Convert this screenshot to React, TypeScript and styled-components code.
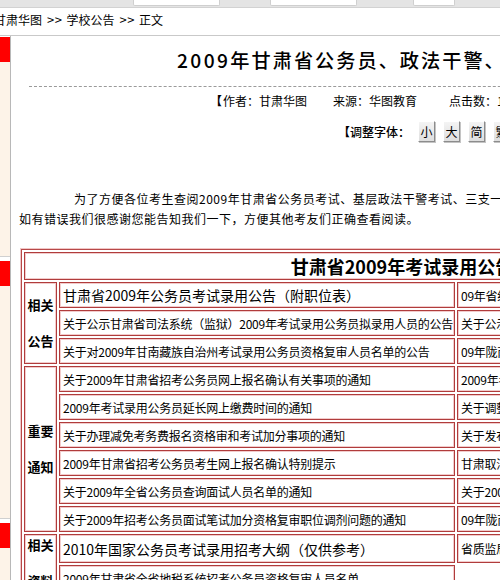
import React from 'react'
import styled, { createGlobalStyle } from 'styled-components'

const Global = createGlobalStyle`
  * { box-sizing: border-box; }
  html, body {
    margin: 0;
    padding: 0;
    background: #fff;
    overflow: hidden;
  }
  body {
    font-family: "Noto Sans CJK SC", "Noto Sans", sans-serif;
    font-size: 12px;
    color: #000;
    text-spacing-trim: space-all;
  }
`

const Page = styled.div`
  width: 820px;
`

const TopStrip = styled.div`
  height: 8px;
  background: #e4e4e4;
  border-bottom: 1px solid #d2d2d2;
  display: flex;
  align-items: flex-start;
`

const StripBox = styled.div<{ $left: number; $width: number }>`
  margin-left: ${({ $left }) => $left}px;
  width: ${({ $width }) => $width}px;
  height: 6px;
  background: #fff;
  border: 1px solid #cfcfcf;
  border-top: none;
  border-radius: 0 0 2px 2px;
`

const Crumbs = styled.div`
  height: 28px;
  padding-top: 4px;
  line-height: 16px;
  text-indent: -6px;
  border-bottom: 1px solid #c9c9c9;
  white-space: nowrap;
`

const Sep = styled.span`
  margin: 0 4px 0 5px;
  font-size: 13px;
  letter-spacing: 0.5px;
`

const Body = styled.div`
  display: flex;
  align-items: flex-start;
`

const Side = styled.div`
  width: 11px;
  flex: none;
  padding-top: 1px;
  border-right: 1px solid #b8b8b8;
  display: flex;
  flex-direction: column;
  gap: 4px;
  min-height: 560px;
`

const SideSection = styled.div<{ $body: number }>`
  display: flex;
  flex-direction: column;
  border-bottom: 1px solid #d0d0d0;

  &::before {
    content: '';
    height: 25px;
    background: #ff0000;
  }

  &::after {
    content: '';
    height: ${({ $body }) => $body}px;
    background: #fdf3e8;
  }
`

const Main = styled.div`
  flex: 1;
  padding-top: 10px;
`

const Title = styled.h1`
  margin: 0;
  padding-left: 166px;
  font-size: 19.2px;
  font-weight: 500;
  letter-spacing: 2px;
  line-height: 28px;
  white-space: nowrap;
`

const Digits = styled.span`
  letter-spacing: 2.4px;
`

const Dashed = styled.div`
  margin: 12px 0 0 18px;
  border-top: 1px dashed #9a9a9a;
`

const Meta = styled.div`
  margin-top: 5px;
  padding-left: 199px;
  line-height: 18px;
  white-space: nowrap;
  display: flex;
`

const Bracket = styled.span`
  font-weight: 700;
`

const MetaItem = styled.span<{ $gap: number }>`
  margin-left: ${({ $gap }) => $gap}px;
`

const FontRow = styled.div`
  margin-top: 10px;
  padding-left: 327px;
  height: 23px;
  display: flex;
  align-items: center;
  white-space: nowrap;
  font-weight: 500;
`

const FontBtn = styled.span`
  width: 17px;
  height: 21px;
  margin-left: 8px;
  display: flex;
  align-items: center;
  justify-content: center;
  font-weight: 400;
  background: linear-gradient(#f4f4f4, #dedede);
  border: 1px solid;
  border-color: #fff #8c8c8c #8c8c8c #fff;
  box-shadow: 1px 1px 0 #c4c4c4;

  &:first-of-type {
    margin-left: 7px;
  }
`

const Para = styled.p`
  margin: 46px 0 0;
  padding-left: 8px;
  font-size: 12px;
  letter-spacing: 0.5px;
  line-height: 20px;
`

const Line = styled.span<{ $indent?: number }>`
  display: block;
  white-space: nowrap;
  padding-left: ${({ $indent }) => $indent ?? 0}px;
`

const Table = styled.table`
  margin: 20px 0 0 10px;
  width: 762px;
  border: 1px solid #b84848;
  box-shadow: 0 0 0 1px #f0c6c6;
  border-spacing: 2px;
  table-layout: fixed;
`

const Cell = styled.td<{ $h?: number; $big?: boolean }>`
  height: ${({ $h }) => $h ?? 26}px;
  padding: 0 3px;
  border: 1px solid #b03c3c;
  box-shadow: inset 0 0 0 1px #f2cccc;
  font-size: ${({ $big }) => ($big ? 14 : 12)}px;
  letter-spacing: ${({ $big }) => ($big ? 0 : -0.25)}px;
  white-space: nowrap;
  overflow: hidden;
  vertical-align: middle;
`

const HeadCell = styled(Cell)`
  height: 28px;
  text-align: center;
  font-size: 18px;
  font-weight: 700;
  letter-spacing: 0;
`

const CatCell = styled(Cell)`
  padding: 0;
  text-align: center;
  font-size: 13px;
  font-weight: 700;
  letter-spacing: 0;
  line-height: 18px;
`

type Row = { title: string; side?: string; big?: boolean; h?: number }

const groups: { label: [string, string]; rows: Row[] }[] = [
  {
    label: ['相关', '公告'],
    rows: [
      { title: '甘肃省2009年公务员考试录用公告（附职位表）', side: '09年省级机关公开遴选公务员公告', big: true },
      { title: '关于公示甘肃省司法系统（监狱）2009年考试录用公务员拟录用人员的公告', side: '关于公示2009年考试录用人员名单' },
      { title: '关于对2009年甘南藏族自治州考试录用公务员资格复审人员名单的公告', side: '09年陇南市考试录用公务员公告' },
    ],
  },
  {
    label: ['重要', '通知'],
    rows: [
      { title: '关于2009年甘肃省招考公务员网上报名确认有关事项的通知', side: '2009年考试录用公务员报名须知' },
      { title: '2009年考试录用公务员延长网上缴费时间的通知', side: '关于调整部分职位资格条件的通知' },
      { title: '关于办理减免考务费报名资格审和考试加分事项的通知', side: '关于发布2009年考试大纲的通知' },
      { title: '2009年甘肃省招考公务员考生网上报名确认特别提示', side: '甘肃取消部分招考职位的通知' },
      { title: '关于2009年全省公务员查询面试人员名单的通知', side: '关于2009年面试有关事项的通知' },
      { title: '关于2009年招考公务员面试笔试加分资格复审职位调剂问题的通知', side: '09年陇南市面试人员名单公告' },
    ],
  },
  {
    label: ['相关', '资料'],
    rows: [
      { title: '2010年国家公务员考试录用招考大纲（仅供参考）', side: '省质监局2009年考试录用公务员公告', big: true, h: 29 },
      { title: '2009年甘肃省全省地税系统招考公务员资格复审人员名单' },
    ],
  },
]

export default function App() {
  return (
    <Page>
      <Global />
      <TopStrip>
        <StripBox $left={133} $width={87} />
        <StripBox $left={50} $width={87} />
        <StripBox $left={56} $width={42} />
      </TopStrip>
      <Crumbs>
        甘肃华图<Sep>&gt;&gt;</Sep>学校公告<Sep>&gt;&gt;</Sep>正文
      </Crumbs>
      <Body>
        <Side>
          <SideSection $body={194} />
          <SideSection $body={232} />
          <SideSection $body={60} />
        </Side>
        <Main>
          <Title>
            <Digits>2009</Digits>年甘肃省公务员、政法干警、三支一扶考试信息汇总
          </Title>
          <Dashed />
          <Meta>
            <Bracket>【</Bracket>
            <MetaItem $gap={1}>作者：甘肃华图</MetaItem>
            <MetaItem $gap={26}>来源：华图教育</MetaItem>
            <MetaItem $gap={32}>点击数：1856</MetaItem>
          </Meta>
          <FontRow>
            <Bracket>【</Bracket>调整字体：
            <FontBtn>小</FontBtn>
            <FontBtn>大</FontBtn>
            <FontBtn>简</FontBtn>
            <FontBtn>繁</FontBtn>
          </FontRow>
          <Para>
            <Line $indent={55}>
              为了方便各位考生查阅2009年甘肃省公务员考试、基层政法干警考试、三支一扶考试的相关信息，我们整理了以下内容，
            </Line>
            <Line>如有错误我们很感谢您能告知我们一下，方便其他考友们正确查看阅读。</Line>
          </Para>
          <Table>
            <colgroup>
              <col style={{ width: 33 }} />
              <col style={{ width: 396 }} />
              <col />
            </colgroup>
            <tbody>
              <tr>
                <HeadCell colSpan={3}>甘肃省2009年考试录用公告</HeadCell>
              </tr>
              {groups.map((g) =>
                g.rows.map((r, i) => (
                  <tr key={g.label.join() + i}>
                    {i === 0 && (
                      <CatCell rowSpan={g.rows.length}>
                        {g.label[0]}
                        <br />
                        <br />
                        {g.label[1]}
                      </CatCell>
                    )}
                    <Cell $big={r.big} $h={r.h}>{r.title}</Cell>
                    {r.side && <Cell $h={r.h}>{r.side}</Cell>}
                  </tr>
                ))
              )}
            </tbody>
          </Table>
        </Main>
      </Body>
    </Page>
  )
}
